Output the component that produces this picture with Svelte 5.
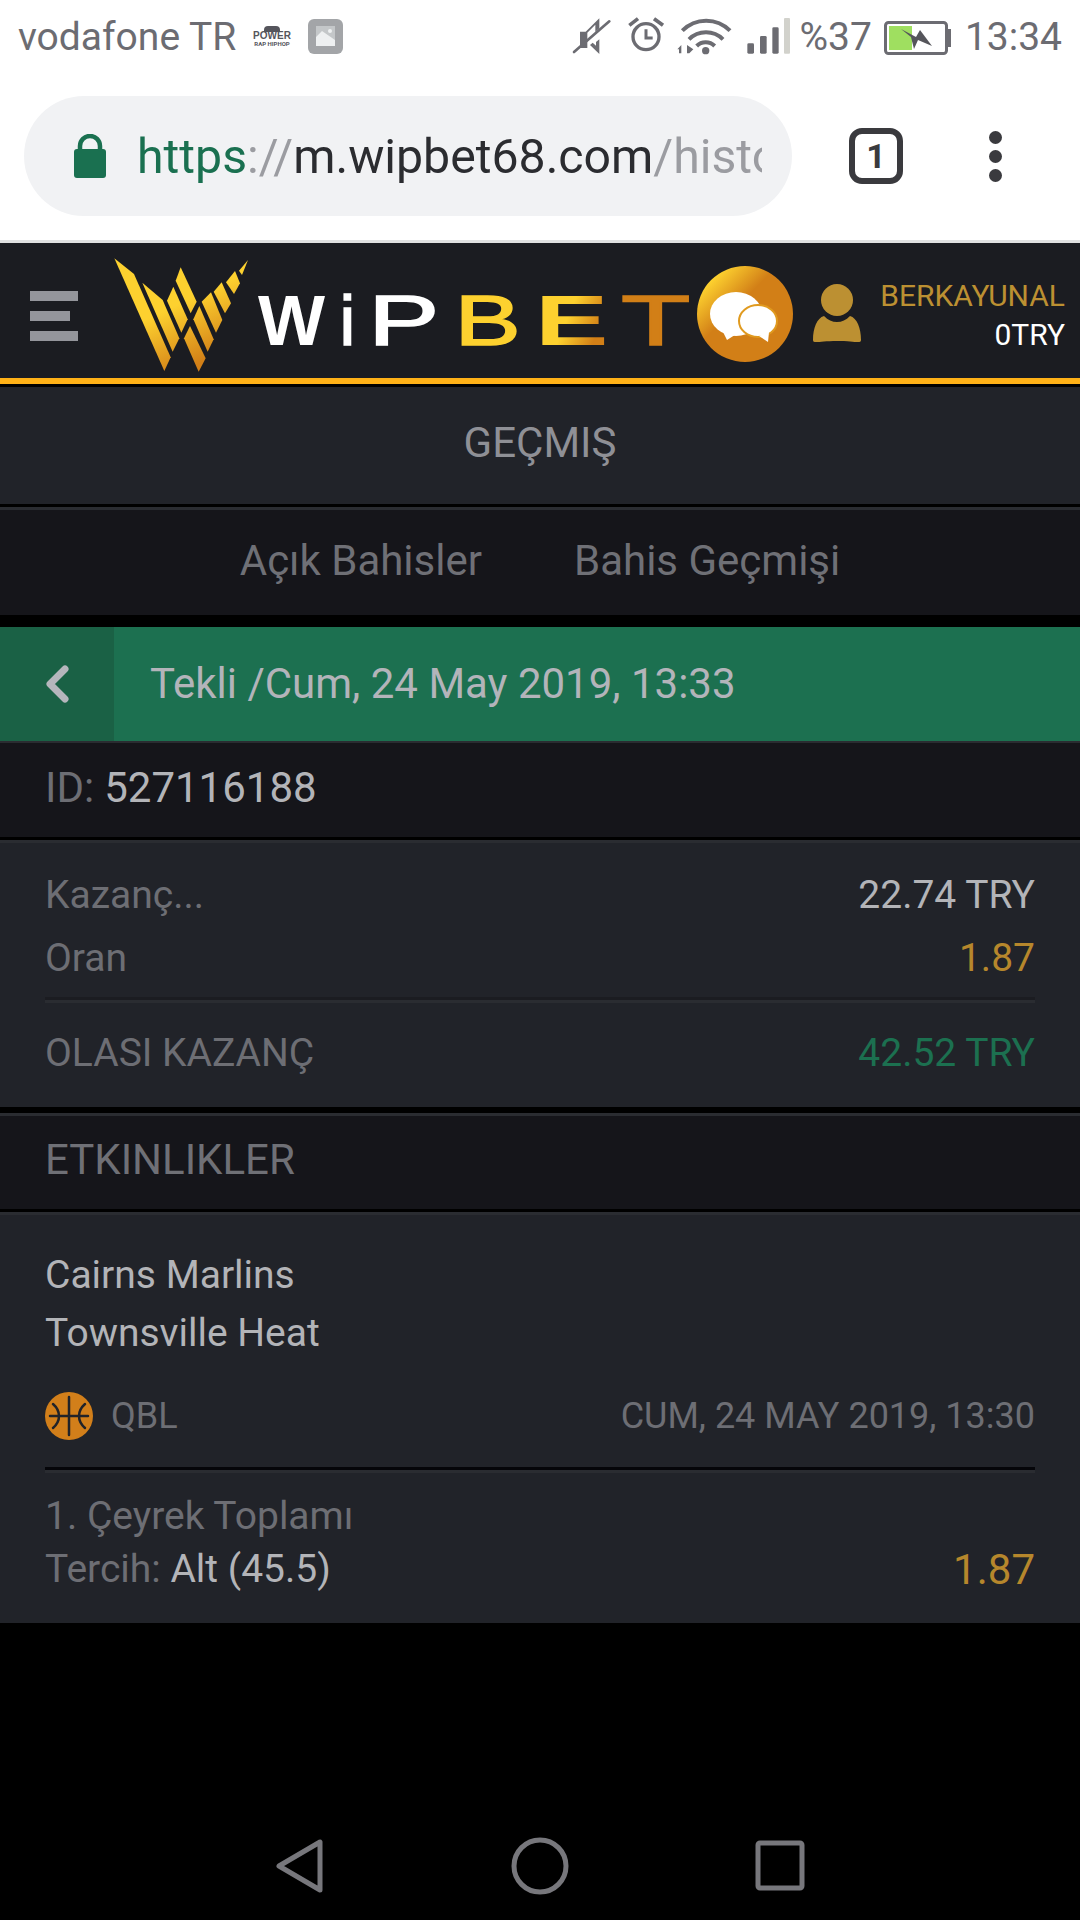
<script>
  // logo stripes, in the 780x390 box of the logo svg
  const stripes = [
    '13,25 72,72 182,322 163,363',
    '97,98 158,150 208,265 188,305',
    '190,110 233,208 214,248 171,152',
    '212,52 260,155 242,190 197,92',
    '240,228 287,325 266,365 222,265',
    '268,168 311,268 293,305 250,208',
    '303,127 337,210 318,248 275,155',
    '335,97 363,160 345,190 311,125',
    '375,63 390,100 372,132 348,97',
    '414,30 396,75 387,62'
  ];
</script>

<div class="screen">
  <div class="chrome">
    <div class="status">
      <span class="carrier">vodafone TR</span>
      <span class="power"><i></i><b>POWER</b><em>RAP HIPHOP</em></span>
      <svg class="pic" width="36" height="36" viewBox="0 0 36 36">
        <rect width="35" height="35" rx="6" fill="#a3a5a8" />
        <rect x="8" y="7" width="19" height="20" fill="#eef0f1" />
        <path d="M8 18l6-6 13 9v-14h-19z" fill="#a3a5a8" opacity=".55" />
        <circle cx="22" cy="12" r="2" fill="#eef0f1" />
      </svg>
      <svg class="icons" width="226" height="60" viewBox="0 0 678 180">
        <g fill="#6c6c72">
          <path d="M30 65h17l41-40v30l-12 11v-22l-24 24v46l-22 0zM88 88v44l-28-27 8-7 10 9v-11z" />
          <path d="M12 126L118 34" stroke="#6c6c72" stroke-width="8" stroke-linecap="round" />
        </g>
        <g fill="none" stroke="#6c6c72">
          <circle cx="228" cy="80" r="39" stroke-width="10" />
          <path d="M228 58v26h20" stroke-width="9" />
          <path d="M178 46l26-20M252 26l27 20" stroke-width="11" />
          <path d="M337 62a100 100 0 0 1 143 0M357 88a72 72 0 0 1 102 0M380 108a38 38 0 0 1 54 0" stroke-width="12" />
        </g>
        <g fill="#6c6c72">
          <circle cx="407" cy="122" r="11" />
          <path d="M322 118l12-13v25h-7v-12zM351 105l19 13-12 12h-7z" />
          <rect x="532" y="100" width="20" height="31" rx="4" />
          <rect x="570" y="78" width="20" height="53" rx="4" />
          <rect x="607" y="52" width="19" height="79" rx="4" />
        </g>
        <rect x="642" y="24" width="18" height="107" rx="3" fill="#d2d2cc" />
      </svg>
      <span class="pct">%37</span>
      <svg class="batt" width="67" height="34" viewBox="0 0 67 34">
        <rect x="1.5" y="1.5" width="61" height="31" rx="3" fill="#fff" stroke="#6c6c72" stroke-width="3" />
        <rect x="5" y="5" width="23" height="24" fill="#9fdf60" />
        <rect x="64" y="8" width="3" height="18" fill="#6c6c72" />
        <path d="M17 8l15 8 4-7 12 16-14-6-4 9-3-12z" fill="#55555b" />
      </svg>
      <span class="clock">13:34</span>
    </div>
    <div class="urlbar">
      <div class="pill">
        <svg width="32" height="44" viewBox="0 0 32 44">
          <path d="M6 18v-6a10 10 0 0 1 20 0v6" fill="none" stroke="#1a7050" stroke-width="4.5" />
          <rect y="15" width="32" height="29" rx="3" fill="#1a7050" />
        </svg>
        <div class="url"><span class="scheme">https</span><span class="faint">://</span><span class="host">m.wipbet68.com</span><span class="faint">/history</span></div>
      </div>
      <div class="tabcount">1</div>
      <div class="dots"><i></i><i></i><i></i></div>
    </div>
  </div>

  <header class="site">
    <div class="burger"><i></i><i class="short"></i><i></i></div>
    <svg class="mark" width="260" height="130" viewBox="0 0 780 390">
      <defs>
        <linearGradient id="gold" gradientUnits="userSpaceOnUse" x1="190" y1="170" x2="270" y2="340">
          <stop offset="0" stop-color="#fdd12f" />
          <stop offset="1" stop-color="#d27f17" />
        </linearGradient>
      </defs>
      {#each stripes as pts}
        <polygon points={pts} fill="url(#gold)" />
      {/each}
    </svg>
    <div class="word">
      <span class="w"><b>W</b></span>
      <span class="i"><b>i</b></span>
      <span class="p"><b>P</b></span>
      <span class="b"><b>B</b></span>
      <span class="e"><b>E</b></span>
      <span class="t"><b>T</b></span>
    </div>
    <svg class="chat" width="96" height="96" viewBox="0 0 96 96">
      <defs>
        <linearGradient id="coin" x1="0" y1="0" x2="1" y2="1">
          <stop offset=".15" stop-color="#fdd12f" />
          <stop offset=".42" stop-color="#d27f17" />
        </linearGradient>
      </defs>
      <circle cx="48" cy="48" r="48" fill="url(#coin)" />
      <ellipse cx="39" cy="48" rx="26" ry="22" fill="#fff" />
      <path d="M24 62l6 12 11-7z" fill="#fff" />
      <ellipse cx="61" cy="55" rx="19" ry="16" fill="#fff" stroke="#e09a1f" stroke-width="2" />
      <path d="M62 70l9 6 1-10z" fill="#fff" />
    </svg>
    <svg class="user" width="48" height="62" viewBox="0 0 48 62">
      <circle cx="24" cy="17" r="16" fill="#bc9032" />
      <path d="M0 57c0-12 4-22 11-24 4 4 8 6 13 6s9-2 13-6c7 2 11 12 11 24 0 4-6 1-24 1s-24 3-24-1z" fill="#bc9032" />
    </svg>
    <div class="acct">
      <span class="name">BERKAYUNAL</span>
      <span class="bal">0TRY</span>
    </div>
  </header>

  <div class="title">GEÇMIŞ</div>

  <nav class="tabs">
    <span>Açık Bahisler</span>
    <span>Bahis Geçmişi</span>
  </nav>

  <div class="green">
    <div class="back">
      <svg width="24" height="38" viewBox="0 0 24 38">
        <path d="M20 4L5 19l15 15" fill="none" stroke="#b5b6bc" stroke-width="7" stroke-linecap="round" stroke-linejoin="round" />
      </svg>
    </div>
    <span class="when-bar">Tekli /Cum, 24 May 2019, 13:33</span>
  </div>

  <div class="idrow"><span class="dim">ID:</span> 527116188</div>

  <section class="panel stake">
    <div class="row r1"><span class="dim">Kazanç...</span><span>22.74 TRY</span></div>
    <div class="row r2"><span class="dim">Oran</span><span class="gold">1.87</span></div>
    <div class="rule"></div>
    <div class="row r3"><span class="dim">OLASI KAZANÇ</span><span class="win">42.52 TRY</span></div>
  </section>

  <div class="subhead">ETKINLIKLER</div>

  <section class="panel event">
    <div class="team first">Cairns Marlins</div>
    <div class="team">Townsville Heat</div>
    <div class="row league">
      <span class="lg">
        <svg width="48" height="48" viewBox="0 0 48 48">
          <circle cx="24" cy="24" r="24" fill="#d27f1a" />
          <path d="M24 5v38M5 24h38M8 12c8 7 8 17 0 24M40 12c-8 7-8 17 0 24" fill="none" stroke="#212329" stroke-width="2.5" stroke-linecap="round" />
        </svg>
        <span class="dim qbl">QBL</span>
      </span>
      <span class="dim when">CUM, 24 MAY 2019, 13:30</span>
    </div>
    <div class="rule strong"></div>
    <div class="market dim">1. Çeyrek Toplamı</div>
    <div class="row pick"><span><span class="dim">Tercih:</span> Alt (45.5)</span><span class="gold big">1.87</span></div>
  </section>

  <footer class="softkeys">
    <svg width="50" height="56" viewBox="0 0 50 56">
      <path d="M45 4v48L4 28z" fill="none" stroke="#77777c" stroke-width="5" stroke-linejoin="round" />
    </svg>
    <svg width="58" height="58" viewBox="0 0 58 58">
      <circle cx="29" cy="29" r="26" fill="none" stroke="#77777c" stroke-width="5" />
    </svg>
    <svg width="50" height="52" viewBox="0 0 50 52">
      <rect x="3" y="3" width="44" height="45" rx="2" fill="none" stroke="#77777c" stroke-width="5" />
    </svg>
  </footer>
</div>

<style>
  :global(body) {
    margin: 0;
    background: #000;
  }

  .screen {
    width: 1080px;
    height: 1920px;
    display: flex;
    flex-direction: column;
    background: #000;
    font-family: Roboto, "Liberation Sans", sans-serif;
    font-size: 39px;
    color: #b3b4b8;
    overflow: hidden;
  }

  .chrome {
    height: 240px;
    background: #fff;
    border-bottom: 3px solid #e0e0e0;
    flex: none;
  }

  .status {
    height: 72px;
    display: flex;
    align-items: center;
    padding: 2px 18px 0 18px;
    box-sizing: border-box;
    color: #6c6c72;
    font-size: 39px;
  }

  .carrier {
    width: 237px;
  }

  .power {
    width: 34px;
    margin-right: 19px;
    display: flex;
    flex-direction: column;
    align-items: center;
    color: #55555c;
    line-height: 8px;
  }

  .power i {
    width: 16px;
    height: 6px;
    background: #55555c;
    border-radius: 4px 4px 0 0;
  }

  .power b {
    font-size: 10px;
    font-family: "Liberation Sans", sans-serif;
  }

  .power em {
    font-size: 6px;
    font-style: normal;
    font-weight: bold;
    white-space: nowrap;
  }

  .pic {
    flex: none;
  }

  .icons {
    margin-left: auto;
    margin-top: 6px;
    flex: none;
  }

  .pct {
    margin-left: 3px;
  }

  .batt {
    margin-left: 12px;
    margin-top: 1px;
    flex: none;
  }

  .clock {
    margin-left: 14px;
  }

  .urlbar {
    margin-top: 24px;
    padding-left: 24px;
    display: flex;
    align-items: center;
  }

  .pill {
    width: 768px;
    height: 120px;
    box-sizing: border-box;
    border-radius: 60px;
    background: #f1f2f4;
    display: flex;
    align-items: center;
    padding: 0 30px 0 50px;
    gap: 31px;
  }

  .url {
    flex: 1;
    overflow: hidden;
    white-space: nowrap;
    font-size: 48.2px;
    color: #2b2c30;
  }

  .scheme {
    color: #1a7050;
  }

  .faint {
    color: #9b9ca1;
  }

  .tabcount {
    margin-left: 57px;
    width: 54px;
    height: 56px;
    box-sizing: border-box;
    border: 6px solid #3a3a3e;
    border-radius: 13px;
    display: flex;
    align-items: center;
    justify-content: center;
    color: #3a3a3e;
    font-size: 34px;
    font-weight: 700;
  }

  .dots {
    margin-left: 86px;
    display: flex;
    flex-direction: column;
    gap: 6px;
  }

  .dots i {
    width: 13px;
    height: 13px;
    border-radius: 50%;
    background: #3a3a3e;
  }

  .site {
    height: 135px;
    flex: none;
    background: #1b1c21;
    border-bottom: 6px solid #ffb117;
    box-shadow: 0 3px 0 #000;
    display: flex;
    align-items: center;
  }

  .burger {
    margin-left: 30px;
    margin-top: 10px;
    width: 48px;
    flex: none;
    display: flex;
    flex-direction: column;
    gap: 10px;
  }

  .burger i {
    height: 10px;
    background: #94959b;
  }

  .burger .short {
    width: 40px;
  }

  .mark {
    margin-left: 32px;
    align-self: flex-start;
    margin-top: 7px;
    flex: none;
  }

  .word {
    margin-left: -112px;
    margin-top: 20px;
    flex: none;
    width: 433px;
    display: flex;
    gap: 17px;
    font-family: "Liberation Sans", sans-serif;
    font-size: 71px;
    line-height: 71px;
    color: #fff;
  }

  .word span {
    display: flex;
    justify-content: center;
    width: 67px;
  }

  .word b {
    display: block;
    font-weight: 400;
    -webkit-text-stroke: 1.5px currentColor;
  }

  .word .i {
    width: 11px;
  }

  .word .w b {
    font-weight: 700;
    -webkit-text-stroke: 0;
  }

  .word .p b {
    transform: scaleX(1.5);
  }

  .word .b b {
    color: #fdd12f;
    transform: scaleX(1.4);
  }

  .word .e b {
    font-weight: 700;
    -webkit-text-stroke: 0;
    background: linear-gradient(105deg, #fdd12f 45%, #d27f17 80%);
    -webkit-background-clip: text;
    background-clip: text;
    color: transparent;
    transform: scaleX(1.55);
  }

  .word .t b {
    color: #d27f17;
    transform: scaleX(1.6);
  }

  .chat {
    margin-left: 6px;
    margin-top: 6px;
    flex: none;
  }

  .user {
    margin-left: 20px;
    margin-top: 6px;
    flex: none;
  }

  .acct {
    margin-left: auto;
    padding: 8px 15px 0 0;
    display: flex;
    flex-direction: column;
    align-items: flex-end;
    font-size: 30px;
    line-height: 39px;
  }

  .name {
    color: #bc9032;
  }

  .bal {
    color: #fff;
  }

  .title {
    margin-top: 3px;
    height: 117px;
    box-sizing: border-box;
    padding-bottom: 7px;
    flex: none;
    background: #212329;
    display: flex;
    align-items: center;
    justify-content: center;
    font-size: 42px;
    color: #8f9096;
  }

  .tabs {
    margin-top: 3px;
    height: 100px;
    padding-bottom: 5px;
    flex: none;
    background: #15151a;
    border-top: 3px solid #2a2c31;
    display: flex;
    align-items: center;
    justify-content: center;
    gap: 92px;
    font-size: 42px;
    color: #6f7076;
  }

  .green {
    margin-top: 12px;
    height: 114px;
    flex: none;
    background: #1c7050;
    display: flex;
    align-items: center;
    gap: 36px;
    font-size: 42px;
    color: #b3b4ba;
  }

  .when-bar {
    padding-bottom: 2px;
  }

  .back {
    width: 114px;
    height: 100%;
    background: #1a6145;
    display: flex;
    align-items: center;
    justify-content: center;
  }

  .idrow {
    height: 96px;
    flex: none;
    box-sizing: border-box;
    background: #15151a;
    border-top: 2px solid #2a2c31;
    display: flex;
    align-items: center;
    gap: 10px;
    padding: 0 45px 5px;
    font-size: 42px;
  }

  .dim {
    color: #6d6e74;
  }

  .gold {
    color: #b6872c;
  }

  .win {
    color: #1c7050;
  }

  .panel {
    flex: none;
    box-sizing: border-box;
    margin-top: 3px;
    background: #212329;
    border-top: 3px solid #2a2c31;
    padding: 0 45px;
  }

  .stake {
    height: 267px;
  }

  .row {
    display: flex;
    justify-content: space-between;
    align-items: center;
    white-space: pre-wrap;
  }

  .r1 {
    padding-top: 29px;
    height: 46px;
  }

  .r2 {
    padding-top: 17px;
    height: 46px;
  }

  .rule {
    margin-top: 16px;
    height: 3px;
    background: #2a2c31;
    border-top: 3px solid #1b1c21;
  }

  .r3 {
    margin-top: 27px;
    height: 46px;
  }

  .subhead {
    margin-top: 6px;
    height: 96px;
    flex: none;
    box-sizing: border-box;
    background: #15151a;
    border-top: 3px solid #2a2c31;
    display: flex;
    align-items: center;
    padding: 0 45px 6px;
    font-size: 42px;
    color: #6f7076;
  }

  .event {
    height: 411px;
  }

  .team {
    height: 58px;
    line-height: 58px;
  }

  .team.first {
    margin-top: 31px;
  }

  .league {
    margin-top: 30px;
    height: 48px;
  }

  .lg {
    display: flex;
    align-items: center;
    gap: 18px;
  }

  .qbl,
  .when {
    font-size: 36px;
  }

  .rule.strong {
    margin-top: 27px;
    border-top-color: #050509;
  }

  .market {
    margin-top: 21px;
    height: 44px;
    line-height: 44px;
  }

  .pick {
    margin-top: 9px;
    height: 44px;
  }

  .big {
    font-size: 42px;
  }

  .softkeys {
    margin-top: auto;
    height: 108px;
    flex: none;
    display: flex;
    align-items: center;
    justify-content: center;
    gap: 186px;
  }
</style>
